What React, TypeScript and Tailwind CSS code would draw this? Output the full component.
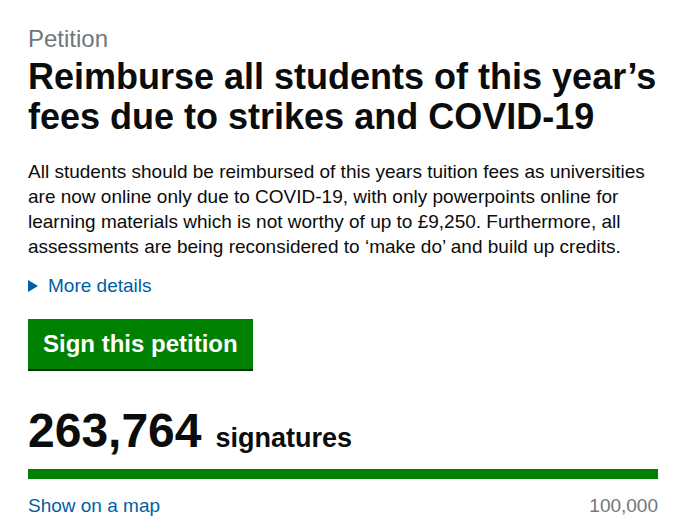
export default function App() {
  return (
    <div className="w-[690px] h-[526px] bg-white overflow-hidden" style={{ fontFamily: '"Liberation Sans", Arial, sans-serif' }}>
      <div className="ml-[28px] w-[630px] pt-[24px]">
        <div className="text-[24px] leading-[30px] text-[#6f777b]">Petition</div>
        <h1 className="mt-[3px] text-[36px] leading-[40px] font-bold text-[#0b0c0c]">
          Reimburse all students of this year’s fees due to strikes and COVID-19
        </h1>
        <p className="mt-[22px] text-[19px] leading-[25px] text-[#0b0c0c]">
          All students should be reimbursed of this years tuition fees as universities are now online only due to COVID-19, with only powerpoints online for learning materials which is not worthy of up to £9,250. Furthermore, all assessments are being reconsidered to ‘make do’ and build up credits.
        </p>
        <div className="mt-[14px] flex items-center text-[19px] leading-[25px] text-[#005ea5]">
          <svg width="10" height="12" viewBox="0 0 10 12" className="mr-[10px] mt-[1px]">
            <polygon points="0,0 10,6 0,12" fill="#005ea5" />
          </svg>
          <span>More details</span>
        </div>
        <div className="mt-[21px] flex">
          <button className="bg-[#008000] text-white font-bold text-[24px] leading-[30px] pl-[15px] pr-[15px] pt-[10px] pb-[10px] shadow-[0_2px_0_#003300]">
            Sign this petition
          </button>
        </div>
        <div className="mt-[34px] flex items-baseline">
          <span className="text-[48px] leading-[56px] font-bold text-[#0b0c0c]">263,764</span>
          <span className="ml-[14px] text-[27px] font-bold text-[#0b0c0c]">signatures</span>
        </div>
        <div className="mt-[10px] h-[10px] bg-[#008000]" />
        <div className="mt-[14px] flex justify-between text-[19px] leading-[25px]">
          <span className="text-[#005ea5]">Show on a map</span>
          <span className="text-[#6f777b]">100,000</span>
        </div>
      </div>
    </div>
  );
}
